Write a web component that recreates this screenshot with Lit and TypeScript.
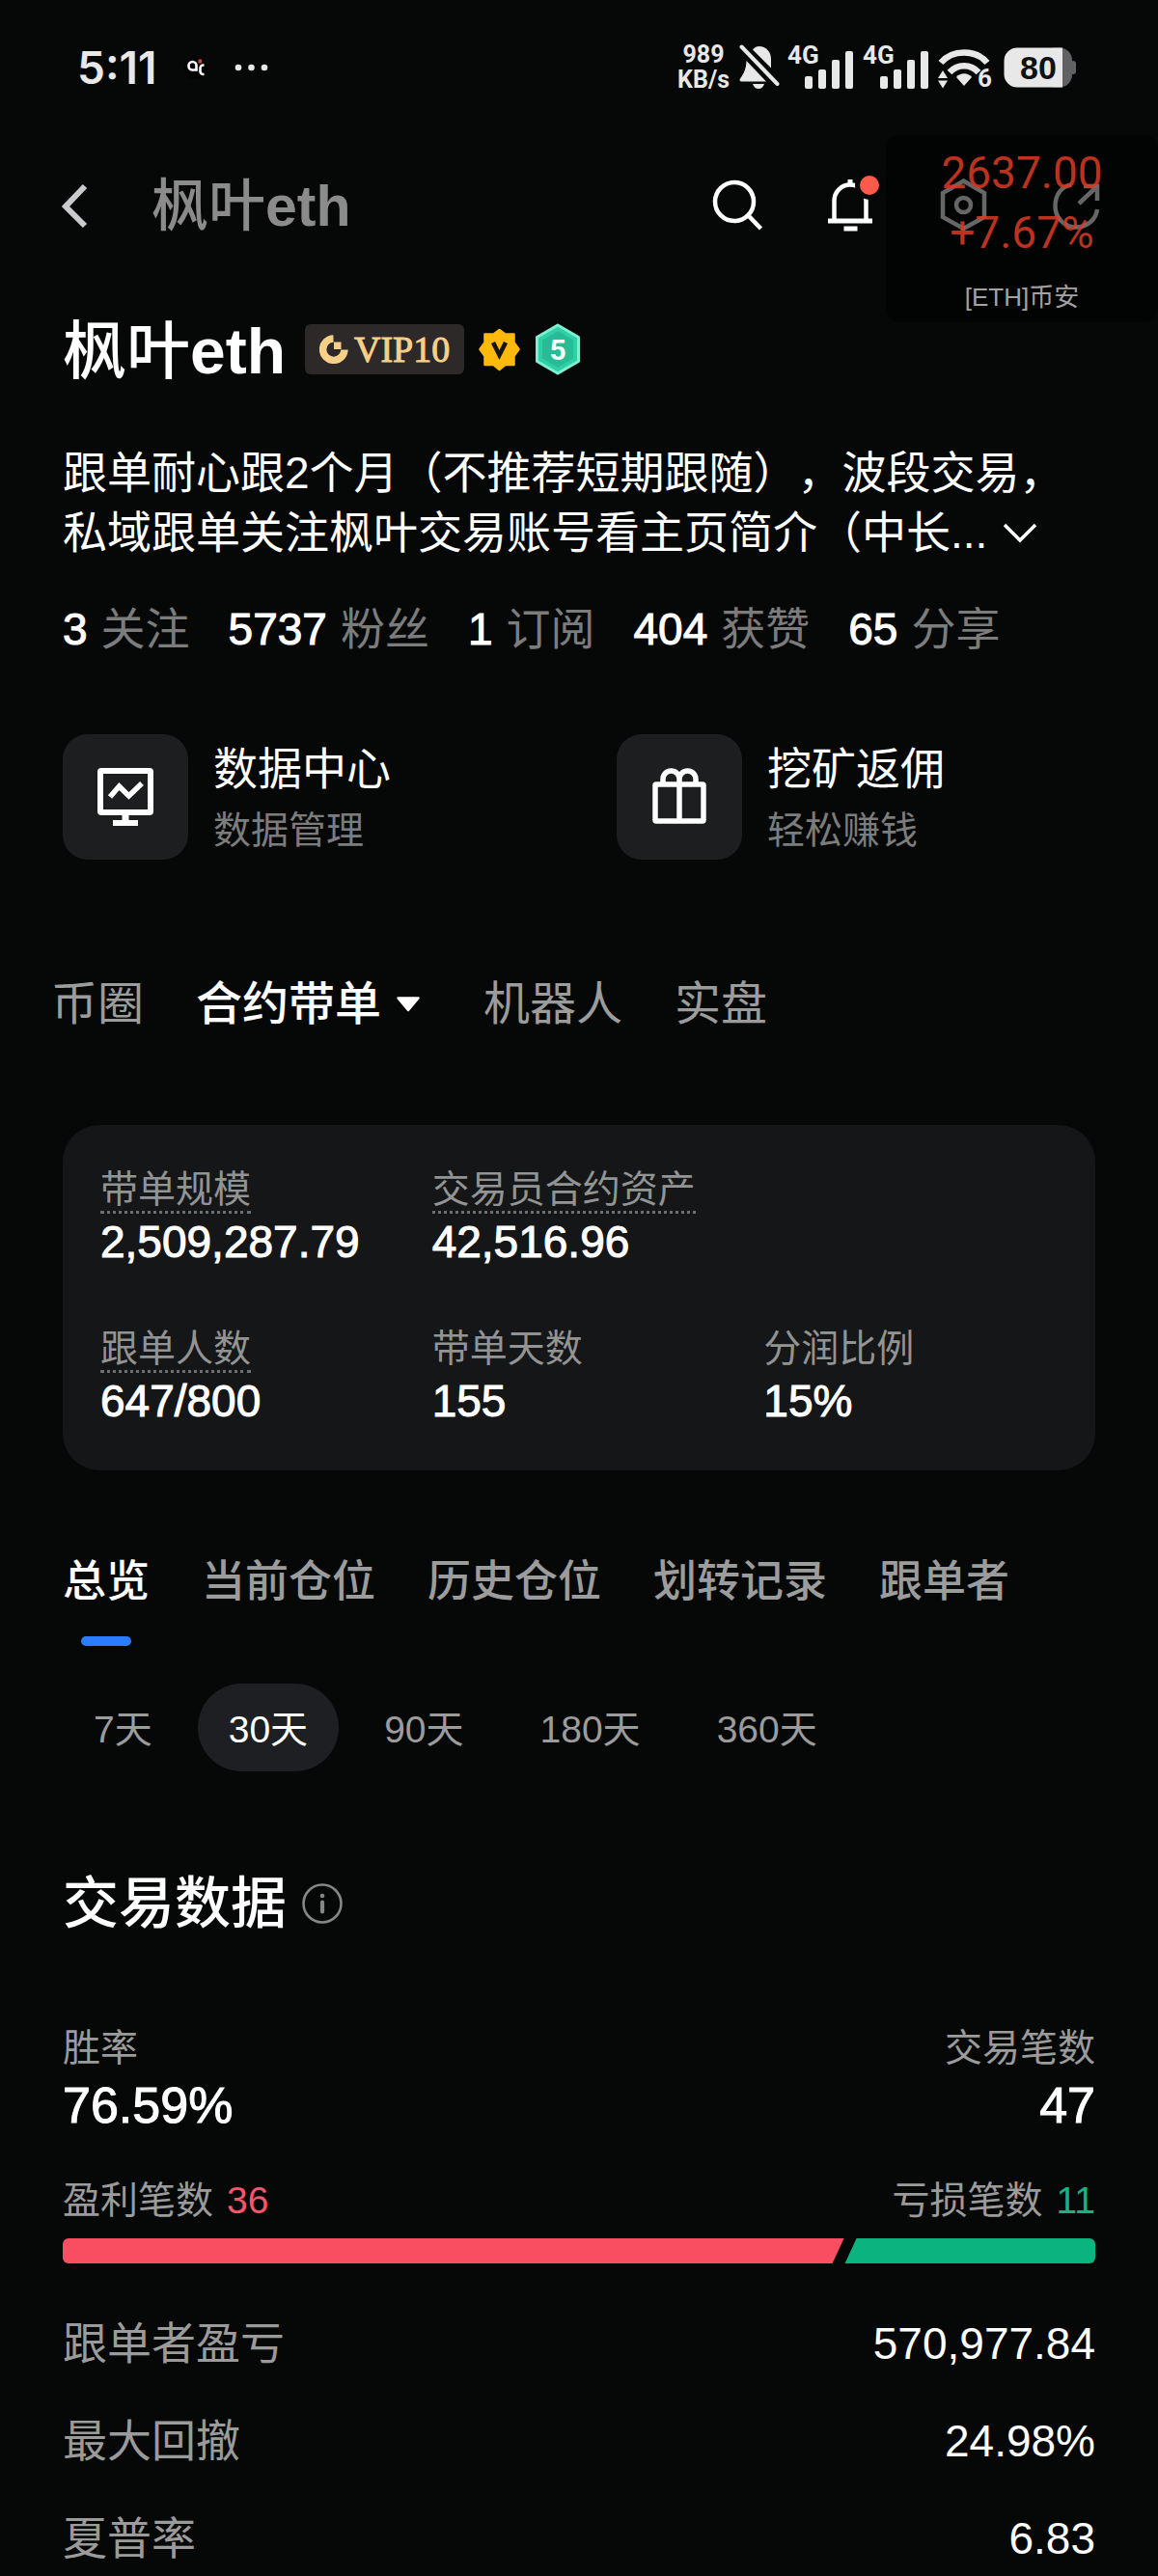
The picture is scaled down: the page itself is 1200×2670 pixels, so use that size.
import { LitElement, html, css, nothing } from "lit";
import { customElement, property, state } from "lit/decorators.js";
import { classMap } from "lit/directives/class-map.js";
import { styleMap } from "lit/directives/style-map.js";

const base = css`
  *, *::before, *::after { box-sizing: border-box; }
  button { border: 0; padding: 0; margin: 0; background: none; color: inherit; font: inherit; cursor: pointer; white-space: nowrap; }
  a { color: inherit; text-decoration: none; }
  h1, h2, p, dl, dt, dd { margin: 0; font-weight: 400; }
  svg { display: block; flex: none; }
`;

@customElement("status-bar")
class StatusBar extends LitElement {
  static styles = [base, css`
    :host { display: block; color: #e8e8e8; }
    .bar { display: flex; align-items: center; justify-content: space-between; height: 140px; padding: 0 84px 0 80px; }
    .side { display: flex; align-items: center; }
    .left { gap: 28px; }
    .right { gap: 6px; }
    .time { font: 600 46px/60px Inter, sans-serif; }
    .speed { display: flex; flex-direction: column; align-items: center; font: 700 25px/26px Roboto, sans-serif; padding-right: 4px; }
    .net, .six { font: 700 26px Roboto, sans-serif; }
    .level { font: 700 34px "Liberation Sans", sans-serif; }
    .battery { margin-left: 4px; }
  `];

  private signal() {
    return html`<svg width="72" height="64" viewBox="-2 -8 72 64" fill="#e8e8e8">
      <text class="net" x="0" y="20">4G</text>
      <rect x="18" y="33" width="8" height="13" rx="2"/>
      <rect x="32" y="26" width="8" height="20" rx="2"/>
      <rect x="46" y="16" width="8" height="30" rx="2"/>
      <rect x="60" y="7" width="8" height="39" rx="2"/>
    </svg>`;
  }

  render() {
    return html`<div class="bar">
      <div class="side left">
        <span class="time">5:11</span>
        <svg width="24" height="24" viewBox="0 0 24 24">
          <circle cx="12" cy="12" r="12" fill="#000"/>
          <path d="M12.500 14.500H8.500a4 4 0 0 1-4-4v-.500a4 4 0 0 1 8 0z" fill="none" stroke="#fff" stroke-width="2.600"/>
          <path d="M20.500 9.500h-1a3 3 0 0 0-3 3v3.500a3 3 0 0 0 3 3h1" fill="none" stroke="#fff" stroke-width="2.600"/>
          <rect x="14.500" y="3.500" width="3.500" height="4" fill="#d24a35"/>
        </svg>
        <svg width="36" height="8" viewBox="0 0 36 8" fill="#e8e8e8"><circle cx="4" cy="4" r="3.300"/><circle cx="17.500" cy="4" r="3.300"/><circle cx="31" cy="4" r="3.300"/></svg>
      </div>
      <div class="side right">
        <span class="speed"><span>989</span><span>KB/s</span></span>
        <svg width="42" height="48" viewBox="0 0 42 48" fill="#e8e8e8">
          <path d="M14 5.500C16 3 18 2 20.500 2 28 2 33 8 33 15v9.500z"/>
          <path d="M7.500 17L28 38.500H2.500c-2 0-2.500-1.500-1.500-3C5 30 7 26 7.500 17z"/>
          <path d="M14 41h12c-1 3-3 5-6 5s-5-2-6-5z"/>
          <path d="M2.500 2.500L39.500 41" stroke="#e8e8e8" stroke-width="4" stroke-linecap="round"/>
        </svg>
        ${this.signal()}${this.signal()}
        <svg width="60" height="56" viewBox="0 -6 60 56">
          <path d="M5 17C17 3 41 3 53 17" fill="none" stroke="#e8e8e8" stroke-width="6.500"/>
          <path d="M14 27C22 18 36 18 44 27" fill="none" stroke="#e8e8e8" stroke-width="6.500"/>
          <path d="M21 32c4-5 12-5 16 0l-8 9z" fill="#e8e8e8"/>
          <path d="M2 33l5-8 5 8zM2 35.500h10l-5 8z" fill="#e8e8e8"/>
          <text class="six" x="43" y="42" fill="#e8e8e8">6</text>
        </svg>
        <svg class="battery" width="76" height="42" viewBox="0 0 76 42">
          <rect x="40" y="0.500" width="31" height="41" rx="13" fill="#606162"/>
          <rect x="69" y="14" width="6" height="14" rx="3" fill="#606162"/>
          <path d="M14 0.500h47v41H14A13.500 13.500 0 0 1 .500 28V14A13.500 13.500 0 0 1 14 .500z" fill="#e8e8e8"/>
          <text class="level" x="17" y="33" fill="#101111">80</text>
        </svg>
      </div>
    </div>`;
  }
}

@customElement("price-float")
class PriceFloat extends LitElement {
  static styles = [base, css`
    :host { display: block; }
    .box { display: flex; flex-direction: column; align-items: center; padding: 8px 0 6px; border-radius: 14px; background: rgba(0, 0, 0, .6); text-align: center; }
    .num { font: 400 46px/62px Roboto, sans-serif; color: rgba(214, 58, 36, .88); }
    .src { font-size: 26px; line-height: 40px; margin-top: 16px; color: #a2a2a2; }
  `];
  render() {
    return html`<div class="box">
      <span class="num">2637.00</span>
      <span class="num">+7.67%</span>
      <span class="src">[ETH]币安</span>
    </div>`;
  }
}

@customElement("app-header")
class AppHeader extends LitElement {
  static styles = [base, css`
    :host { display: block; }
    .head { display: flex; align-items: center; justify-content: space-between; height: 144px; padding: 0 59px 0 51px; }
    .side { display: flex; align-items: center; gap: 54px; }
    .actions { gap: 65px; }
    .title { font-size: 59px; line-height: 72px; font-weight: 500; color: #8a8b8a; padding-top: 4px; }
    .title b { font-weight: 700; }
  `];
  render() {
    return html`<header class="head">
      <div class="side">
        <button aria-label="返回"><svg width="52" height="56" viewBox="0 0 52 56"><path d="M37 9L17 30 37 50" fill="none" stroke="#c9cccc" stroke-width="6"/></svg></button>
        <span class="title">枫叶<b>eth</b></span>
      </div>
      <div class="side actions">
        <button aria-label="搜索"><svg width="52" height="56" viewBox="0 0 52 56" fill="none" stroke="#fff" stroke-width="4.500"><circle cx="23" cy="25" r="20"/><path d="M37.500 39.500L50.500 53"/></svg></button>
        <button aria-label="通知"><svg width="52" height="56" viewBox="0 0 52 56" overflow="visible" fill="none" stroke="#fff">
          <path d="M9.500 45V24a16.500 16.500 0 0 1 33 0v21" stroke-width="4.500"/>
          <path d="M26 2v7" stroke-width="5"/><path d="M3 45h46M19.500 53h14" stroke-width="5"/>
          <circle cx="46" cy="8" r="12.500" fill="#ff5a4b" stroke="#060808" stroke-width="5"/></svg></button>
        <button aria-label="设置"><svg width="52" height="56" viewBox="0 0 52 56" fill="none" stroke="#fff" stroke-width="4.500"><path d="M26.500 3.500L48 16v25L26.500 53 5 41V16z"/><circle cx="26.500" cy="28.500" r="7.500"/></svg></button>
        <button aria-label="分享"><svg width="52" height="56" viewBox="0 0 52 56" fill="none" stroke="#fff" stroke-width="4.500"><path d="M21 7.500C11 9 4.500 18 4.500 29.500A21.500 21.500 0 0 0 26 51.500C38 51.500 47 43 48 33"/><path d="M29 27L47 10M34 9h14v15"/></svg></button>
      </div>
    </header>`;
  }
}

@customElement("profile-block")
class ProfileBlock extends LitElement {
  @state() private open = false;

  static styles = [base, css`
    :host { display: block; }
    .name { display: flex; align-items: center; gap: 14px; height: 64px; }
    .name h1 { font-size: 66px; line-height: 64px; font-weight: 500; padding: 4px 6px 0 0; white-space: nowrap; }
    .name h1 b { font-weight: 700; }
    .vip { display: flex; align-items: center; gap: 6px; height: 52px; padding: 0 15px; border-radius: 6px; background: #2d2928; color: #f6cf88; font: 400 38px/52px "Liberation Serif", serif; -webkit-text-stroke: 1px #f6cf88; }
    .score { font: 700 30px Roboto, sans-serif; }
    .bio { margin-top: 65px; font-size: 46px; line-height: 62px; text-spacing-trim: space-all; }
    .more { display: inline-block; margin-left: 12px; vertical-align: 2px; }
    .stats { display: flex; gap: 40px; margin-top: 39px; font-size: 46px; line-height: 60px; white-space: nowrap; }
    .stat { display: flex; gap: 14px; }
    .stat b { font-weight: 400; -webkit-text-stroke: 1px #fff; }
    .stat span { color: #7c7c7c; }
    .tiles { display: grid; grid-template-columns: 1fr 1fr; gap: 78px; margin-top: 77px; }
    .tile { display: flex; align-items: center; gap: 26px; }
    .icon { display: flex; align-items: center; justify-content: center; width: 130px; height: 130px; border-radius: 26px; background: #1d1e20; }
    .words { display: flex; flex-direction: column; line-height: 64px; padding-top: 6px; }
    .words strong { font-weight: 400; font-size: 46px; }
    .words span { font-size: 39px; color: #7c7c7c; }
  `];

  private stats: [string, string][] = [["3", "关注"], ["5737", "粉丝"], ["1", "订阅"], ["404", "获赞"], ["65", "分享"]];

  render() {
    return html`
      <div class="name">
        <h1>枫叶<b>eth</b></h1>
        <span class="vip">
          <svg width="30" height="30" viewBox="0 0 30 30"><path d="M14.500 4A11.200 11.200 0 1 0 26 15.500" fill="none" stroke="#f6cf88" stroke-width="7.500"/><path d="M15 7.500h7.500V15H15z" fill="#f6cf88"/></svg>
          VIP10
        </span>
        <svg width="45" height="46" viewBox="0 0 45 46">
          <path d="M22.500 3l6 4.500h9V16l5 7-5 7v9h-9l-6 5-6-5h-9v-9l-5-7 5-7V7.500h9z" fill="#ffb90a" stroke="#ffb90a" stroke-width="2.500" stroke-linejoin="round"/>
          <path d="M16 16l6.500 13L29 16" fill="none" stroke="#161310" stroke-width="4.500"/>
        </svg>
        <svg width="48" height="54" viewBox="0 0 48 54">
          <path d="M24 2l21.500 12.500v25L24 52 2.500 39.500v-25z" fill="#2fd0a5" stroke="#7cf0d0" stroke-width="3" stroke-linejoin="round"/>
          <path d="M24 8l16 9.500v19L24 46 8 36.500v-19z" fill="#27b691" opacity=".75"/>
          <text class="score" x="24" y="38" text-anchor="middle" fill="#f4fffb">5</text>
        </svg>
      </div>
      <p class="bio">跟单耐心跟2个月（不推荐短期跟随），波段交易，私域跟单关注枫叶交易账号看主页简介（中长...<button class="more" aria-label="展开" aria-expanded=${this.open} @click=${() => (this.open = !this.open)}><svg width="44" height="26" viewBox="0 0 44 26"><path d="M6 4l16 16L38 4" fill="none" stroke="#fff" stroke-width="3.500"/></svg></button></p>
      <div class="stats">${this.stats.map(([n, l]) => html`<a class="stat" href="#"><b>${n}</b><span>${l}</span></a>`)}</div>
      <div class="tiles">
        <a class="tile" href="#">
          <span class="icon"><svg width="60" height="62" viewBox="0 0 60 62" fill="none" stroke="#fff"><rect x="4" y="4" width="52" height="43" rx="1" stroke-width="6"/><path d="M14 31l9.500-11 10 10L47 17" stroke-width="5.500"/><path d="M30 47v10" stroke-width="7"/><path d="M17 58h26" stroke-width="6"/></svg></span>
          <span class="words"><strong>数据中心</strong><span>数据管理</span></span>
        </a>
        <a class="tile" href="#">
          <span class="icon"><svg width="56" height="60" viewBox="0 0 56 60" fill="none" stroke="#fff" stroke-width="5.500"><rect x="3" y="17" width="50" height="38" rx="1"/><path d="M28 17v38M11 17v-5.500a8.500 8.500 0 0 1 17 0V17M28 17v-5.500a8.500 8.500 0 0 1 17 0V17"/></svg></span>
          <span class="words"><strong>挖矿返佣</strong><span>轻松赚钱</span></span>
        </a>
      </div>`;
  }
}

@customElement("main-tabs")
class MainTabs extends LitElement {
  @state() private active = 1;
  static styles = [base, css`
    :host { display: block; }
    .tabs { display: flex; gap: 54px; font-size: 48px; line-height: 60px; }
    .tab { display: flex; align-items: center; gap: 14px; color: #9b9c9b; }
    .on { color: #fff; font-weight: 500; }
  `];
  render() {
    return html`<nav class="tabs">${["币圈", "合约带单", "机器人", "实盘"].map((t, i) => html`
      <button class=${classMap({ tab: true, on: i === this.active })} @click=${() => (this.active = i)}>${t}${i === 1
        ? html`<svg width="38" height="18" viewBox="0 0 38 18"><path d="M3.500 2.500h21L14 15z" fill="currentColor" stroke="currentColor" stroke-width="2.500" stroke-linejoin="round"/></svg>` : nothing}</button>`)}</nav>`;
  }
}

@customElement("summary-card")
class SummaryCard extends LitElement {
  static styles = [base, css`
    :host { display: block; }
    .card { display: grid; grid-template-columns: repeat(3, 1fr); row-gap: 64px; padding: 45px 0 47px 39px; border-radius: 38px; background: #151617; }
    .wide { grid-column: span 2; }
    .label { display: block; width: fit-content; font-size: 39px; line-height: 44px; color: #929393; border-bottom: 3px dotted transparent; }
    .hint { border-bottom-color: #6d6e6e; }
    .value { font-size: 46px; line-height: 50px; padding-top: 4px; -webkit-text-stroke: 1px #fff; }
  `];
  private items = [
    { l: "带单规模", v: "2,509,287.79", hint: true },
    { l: "交易员合约资产", v: "42,516.96", hint: true, wide: true },
    { l: "跟单人数", v: "647/800", hint: true },
    { l: "带单天数", v: "155" },
    { l: "分润比例", v: "15%" },
  ];
  render() {
    return html`<dl class="card">${this.items.map((i) => html`<div class=${classMap({ wide: !!i.wide })}>
      <dt class=${classMap({ label: true, hint: !!i.hint })}>${i.l}</dt><dd class="value">${i.v}</dd></div>`)}</dl>`;
  }
}

@customElement("trade-overview")
class TradeOverview extends LitElement {
  @state() private section = 0;
  @state() private range = 1;
  @property({ type: Number }) wins = 36;
  @property({ type: Number }) losses = 11;

  static styles = [base, css`
    :host { display: block; }
    .tabs { display: flex; gap: 54px; font-size: 45px; line-height: 60px; font-weight: 500; color: #9b9c9b; }
    .tab { display: flex; flex-direction: column; align-items: center; gap: 26px; }
    .tab::after { content: ""; width: 52px; height: 10px; border-radius: 5px; }
    .tab.on { color: #fff; }
    .tab.on::after { background: #2a7dff; }
    .ranges { display: flex; gap: 15px; margin-top: 39px; font-size: 39px; color: #9b9c9b; }
    .chip { height: 91px; padding: 0 32px 4px; border-radius: 46px; }
    .chip.on { background: #1e1f22; color: #fff; }
    .title { display: flex; align-items: center; gap: 16px; margin-top: 107px; }
    .title h2 { font-size: 58px; line-height: 60px; font-weight: 500; }
    .pair { display: flex; justify-content: space-between; }
    .rate { margin-top: 98px; }
    .pair div:last-child { text-align: right; }
    .label { font-size: 39px; line-height: 44px; color: #9a9b9a; }
    .big { font-size: 52px; line-height: 60px; padding-top: 7px; -webkit-text-stroke: 1px #fff; }
    .counts { margin-top: 47px; }
    .counts b { font-weight: 400; margin-left: 14px; }
    .win { color: #f4566a; }
    .loss { color: #17b380; }
    .ratio { display: flex; height: 26px; margin-top: 17px; border-radius: 6px; overflow: hidden; }
    .ratio .up { background: #f94e61; clip-path: polygon(0 0, 100% 0, calc(100% - 12px) 100%, 0 100%); }
    .ratio .down { flex: 1; background: #0bb37f; clip-path: polygon(13px 0, 100% 0, 100% 100%, 1px 100%); }
    .rows { display: flex; flex-direction: column; gap: 41px; margin-top: 53px; padding-bottom: 10px; font-size: 46px; line-height: 60px; }
    .row { display: flex; justify-content: space-between; }
    .row dt { color: #9a9b9a; }
  `];

  render() {
    const share = (this.wins / (this.wins + this.losses)) * 100;
    return html`
      <nav class="tabs">${["总览", "当前仓位", "历史仓位", "划转记录", "跟单者"].map((t, i) => html`
        <button class=${classMap({ tab: true, on: i === this.section })} @click=${() => (this.section = i)}>${t}</button>`)}</nav>
      <div class="ranges">${[7, 30, 90, 180, 360].map((d, i) => html`
        <button class=${classMap({ chip: true, on: i === this.range })} @click=${() => (this.range = i)}>${d}天</button>`)}</div>
      <div class="title"><h2>交易数据</h2>
        <button aria-label="说明"><svg width="42" height="42" viewBox="0 0 42 42"><circle cx="21" cy="21" r="19.500" fill="none" stroke="#858686" stroke-width="2.600"/><circle cx="21" cy="13" r="2.300" fill="#858686"/><path d="M21 19.500v10" stroke="#858686" stroke-width="4.200" stroke-linecap="round"/></svg></button></div>
      <div class="pair rate">
        <div><div class="label">胜率</div><div class="big">76.59%</div></div>
        <div><div class="label">交易笔数</div><div class="big">${this.wins + this.losses}</div></div>
      </div>
      <div class="pair counts label">
        <span>盈利笔数<b class="win">${this.wins}</b></span>
        <span>亏损笔数<b class="loss">${this.losses}</b></span>
      </div>
      <div class="ratio">
        <div class="up" style=${styleMap({ width: `calc(${share}% - 10px)` })}></div>
        <div class="down"></div>
      </div>
      <dl class="rows">${[["跟单者盈亏", "570,977.84"], ["最大回撤", "24.98%"], ["夏普率", "6.83"]].map(([l, v]) => html`
        <div class="row"><dt>${l}</dt><dd>${v}</dd></div>`)}</dl>`;
  }
}

@customElement("app-root")
class AppRoot extends LitElement {
  static styles = [base, css`
    :host { display: block; position: relative; min-height: 100vh; background: #060808; color: #fff; font-family: "Liberation Sans", "Noto Sans CJK SC", sans-serif; }
    .float { position: absolute; top: 140px; right: 0; width: 282px; }
    .body { display: flex; flex-direction: column; padding: 46px 65px 0; }
    .main { margin: 118px 0 0 -12px; }
    .card { margin-top: 95px; }
    .overview { margin-top: 86px; }
  `];
  render() {
    return html`
      <status-bar></status-bar>
      <app-header></app-header>
      <div class="body">
        <profile-block></profile-block>
        <main-tabs class="main"></main-tabs>
        <summary-card class="card"></summary-card>
        <trade-overview class="overview"></trade-overview>
      </div>
      <price-float class="float"></price-float>`;
  }
}
